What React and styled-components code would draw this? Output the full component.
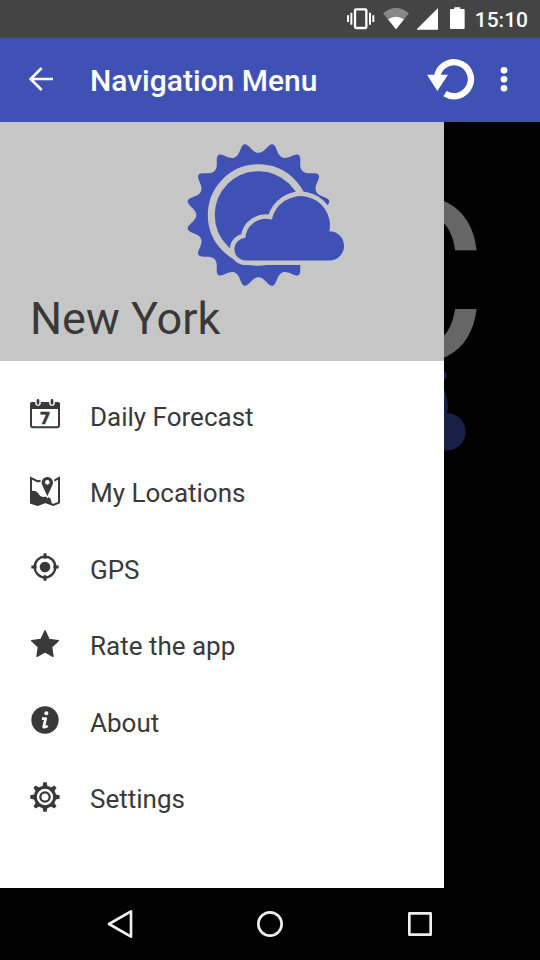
import React from "react";
import styled, { createGlobalStyle } from "styled-components";

const indigo = "#3f51b5";
const ink = "#393939";
const headerGrey = "#c6c6c6";

const GlobalStyle = createGlobalStyle`
  * { box-sizing: border-box; }
  body {
    margin: 0;
    background: #000;
    font-family: Roboto, "Noto Sans", sans-serif;
  }
`;

const Screen = styled.div`
  min-height: 100vh;
  display: flex;
  flex-direction: column;
  background: #000;
`;

const StatusBar = styled.div`
  height: 38px;
  padding-right: 12px;
  display: flex;
  align-items: center;
  justify-content: flex-end;
  gap: 8px;
  background: #444;
  color: #fff;
`;

const Clock = styled.time`
  font-size: 21px;
  font-weight: 500;
  line-height: 24px;
  padding-top: 2px;
`;

const AppBar = styled.header`
  height: 84px;
  padding: 0 32px 0 29px;
  display: flex;
  align-items: center;
  background: ${indigo};
  color: #fff;
`;

const Title = styled.h1`
  margin: 0;
  padding: 2px 0 0 37px;
  flex: 1;
  font-size: 30px;
  font-weight: 500;
  line-height: 36px;
`;

const Actions = styled.div`
  display: flex;
  align-items: center;
  gap: 25px;
`;

const IconButton = styled.button`
  padding: 0;
  border: 0;
  background: none;
  color: inherit;
  display: flex;
  align-items: center;
  justify-content: center;
  cursor: pointer;
`;

const Body = styled.main`
  flex: 1;
  display: grid;
  grid-template-columns: 1fr;
`;

const Scene = styled.section`
  grid-area: 1 / 1;
  display: grid;
  align-items: start;
  justify-items: end;
  opacity: 0.4;
`;

const Unit = styled.div`
  grid-area: 1 / 1;
  padding: 47px 53px 0 0;
  color: #fff;
  font-size: 228px;
  line-height: 228px;
`;

const SceneIcon = styled.div`
  grid-area: 1 / 1;
  padding: 179px 73px 0 0;
`;

const Drawer = styled.aside`
  grid-area: 1 / 1;
  z-index: 1;
  margin-right: 96px;
  display: flex;
  flex-direction: column;
  background: #fff;
`;

const DrawerHeader = styled.div`
  padding: 21px 30px 10px;
  display: flex;
  flex-direction: column;
  background: ${headerGrey};
  color: ${ink};
`;

const HeaderIcon = styled.div`
  display: flex;
  justify-content: flex-end;
  padding-right: 69px;
`;

const Place = styled.h2`
  margin: 0;
  font-size: 45px;
  font-weight: 400;
  line-height: 64px;
`;

const Menu = styled.nav`
  flex: 1;
  display: flex;
`;

const MenuList = styled.ul`
  flex: 1;
  margin: 0;
  padding: 15px 0 53px;
  list-style: none;
  display: grid;
  grid-auto-rows: 1fr;
`;

const MenuItem = styled.li`
  display: flex;
`;

const MenuLink = styled.a`
  flex: 1;
  padding: 0 30px;
  display: flex;
  align-items: center;
  gap: 30px;
  color: ${ink};
  text-decoration: none;
`;

const MenuLabel = styled.span`
  padding-top: 5px;
  font-size: 26px;
  line-height: 32px;
`;

const SystemNav = styled.footer`
  height: 72px;
  padding: 0 45px;
  display: grid;
  grid-template-columns: repeat(3, 1fr);
  color: #eee;
`;

const sunPath = (() => {
  const cx = 235;
  const cy = 240;
  const at = (r, deg, t) => {
    const a = (deg * Math.PI) / 180;
    const x = cx + r * Math.cos(a) - t * Math.sin(a);
    const y = cy + r * Math.sin(a) + t * Math.cos(a);
    return `${x.toFixed(1)} ${y.toFixed(1)}`;
  };
  let d = `M${at(187, 0, 0)}`;
  for (let i = 0; i < 16; i += 1) {
    const a = i * 22.5;
    d += `C${at(187, a, 19)} ${at(217, a + 11.25, -13)} ${at(217, a + 11.25, 0)}`;
    d += `C${at(217, a + 11.25, 13)} ${at(187, a + 22.5, -19)} ${at(187, a + 22.5, 0)}`;
  }
  return `${d}Z`;
})();

function WeatherIcon({ width, height, backdrop }) {
  return (
    <svg width={width} height={height} viewBox="20 24 475 432" aria-hidden="true">
      <path d={sunPath} fill={indigo} />
      <circle cx="235" cy="240" r="142" fill="none" stroke={backdrop} strokeWidth="21" />
      <path
        d="M198 377A34 34 0 0 1 195 309A62 62 0 0 1 275 254A88 88 0 0 1 448 289A44 44 0 0 1 448 377Z"
        fill={indigo}
        stroke={backdrop}
        strokeWidth="27"
        paintOrder="stroke"
      />
    </svg>
  );
}

function MenuIcon({ children }) {
  return (
    <svg width="30" height="30" viewBox="0 0 90 90" fill="none" stroke="none" aria-hidden="true">
      {children}
    </svg>
  );
}

const CalendarIcon = () => (
  <MenuIcon>
    <rect x="3" y="12" width="84" height="73" rx="6" stroke={ink} strokeWidth="6" />
    <path d="M0 30V16Q0 9 7 9H83Q90 9 90 16V30Z" fill={ink} />
    <path d="M24 0V12M66 0V12" stroke="#fff" strokeWidth="17" strokeLinecap="round" />
    <path d="M24 4V13M66 4V13" stroke={ink} strokeWidth="8" strokeLinecap="round" />
    <text
      x="45"
      y="75"
      textAnchor="middle"
      fontFamily="DejaVu Sans"
      fontWeight="700"
      fontSize="48"
      fill={ink}
      stroke={ink}
      strokeWidth="1"
    >
      7
    </text>
  </MenuIcon>
);

const MapIcon = () => (
  <MenuIcon>
    <path d="M32 14L24 16L3 6V80L23 87L46 78L70 87L87 80V6L73 14" stroke={ink} strokeWidth="6" />
    <path d="M2 45Q18 41 26 54Q31 65 44 62Q62 61 63 73L66 85L46 78L23 87L2 80Z" fill={ink} />
    <path d="M52 61Q42 39 37 28A17 17 0 1 1 67 28Q62 39 52 61Z" fill={ink} stroke="#fff" strokeWidth="6" paintOrder="stroke" />
    <circle cx="52" cy="19" r="7" fill="#fff" />
  </MenuIcon>
);

const GpsIcon = () => (
  <MenuIcon>
    <circle cx="45" cy="45" r="31" stroke={ink} strokeWidth="7" />
    <circle cx="45" cy="45" r="16" fill={ink} />
    <path d="M45 4V20M45 70V86M4 45H20M70 45H86" stroke={ink} strokeWidth="9" />
  </MenuIcon>
);

const StarIcon = () => (
  <MenuIcon>
    <path
      d="M45 5L57 31L85 35L65 54L69 82L45 69L21 82L25 54L5 35L33 31Z"
      fill={ink}
      stroke={ink}
      strokeWidth="4"
      strokeLinejoin="round"
    />
  </MenuIcon>
);

const InfoIcon = () => (
  <MenuIcon>
    <circle cx="45" cy="45" r="41" fill={ink} />
    <circle cx="49" cy="25" r="6" fill="#fff" />
    <path d="M36 41H47L41 66Q46 68 53 62" stroke="#fff" strokeWidth="8" strokeLinejoin="round" />
  </MenuIcon>
);

const GearIcon = () => (
  <MenuIcon>
    <circle cx="45" cy="45" r="29" stroke={ink} strokeWidth="9" />
    <circle cx="45" cy="45" r="14" stroke={ink} strokeWidth="7" />
    {[0, 45, 90, 135, 180, 225, 270, 315].map((angle) => (
      <path key={angle} d="M37 16L40 1H50L53 16Z" fill={ink} transform={`rotate(${angle} 45 45)`} />
    ))}
  </MenuIcon>
);

const menuItems = [
  { label: "Daily Forecast", href: "#daily", Icon: CalendarIcon },
  { label: "My Locations", href: "#locations", Icon: MapIcon },
  { label: "GPS", href: "#gps", Icon: GpsIcon },
  { label: "Rate the app", href: "#rate", Icon: StarIcon },
  { label: "About", href: "#about", Icon: InfoIcon },
  { label: "Settings", href: "#settings", Icon: GearIcon },
];

function StatusIcons() {
  return (
    <>
      <svg width="28" height="24" viewBox="21 21 84 72" fill="none" stroke="#fff" aria-label="Vibrate">
        <rect x="45" y="28" width="34" height="56" rx="3" strokeWidth="7" />
        <path d="M24 46V66M34 38V74M90 38V74M100 46V66" strokeWidth="6" />
      </svg>
      <svg width="26" height="24" viewBox="129 21 78 72" aria-label="Wi-Fi">
        <path d="M168 88L129 40Q168 8 207 40Z" fill="#878787" />
        <path d="M168 88L144 58Q168 42 192 58Z" fill="#fff" />
      </svg>
      <svg width="22" height="24" viewBox="231 21 66 72" aria-label="Signal">
        <path d="M229 89H294V24Z" fill="#fff" />
      </svg>
      <svg width="20" height="24" viewBox="321 21 60 72" aria-label="Battery">
        <path d="M343 22H361V27H371Q374 27 374 30V84Q374 87 371 87H333Q330 87 330 84V30Q330 27 333 27H343Z" fill="#fff" />
      </svg>
    </>
  );
}

export default function App() {
  return (
    <Screen>
      <GlobalStyle />
      <StatusBar>
        <StatusIcons />
        <Clock>15:10</Clock>
      </StatusBar>

      <AppBar>
        <IconButton aria-label="Back">
          <svg width="24" height="26" viewBox="0 0 72 78" fill="none" stroke="currentColor" strokeWidth="8">
            <path d="M72 36H6M38 3L5 36L38 69" />
          </svg>
        </IconButton>
        <Title>Navigation Menu</Title>
        <Actions>
          <IconButton aria-label="Refresh">
            <svg width="48" height="44" viewBox="49 61 144 132">
              <path d="M79 120A51 51 0 1 1 103 168" fill="none" stroke="currentColor" strokeWidth="19" />
              <path d="M49 111H112L80 160Z" fill="currentColor" />
            </svg>
          </IconButton>
          <IconButton aria-label="More options">
            <svg width="8" height="26" viewBox="0 0 24 78" fill="currentColor">
              <circle cx="12" cy="10" r="10" />
              <circle cx="12" cy="37" r="10" />
              <circle cx="12" cy="64" r="10" />
            </svg>
          </IconButton>
        </Actions>
      </AppBar>

      <Body>
        <Scene>
          <Unit>C</Unit>
          <SceneIcon>
            <WeatherIcon width={201} height={183} backdrop="#000" />
          </SceneIcon>
        </Scene>
        <Drawer>
          <DrawerHeader>
            <HeaderIcon>
              <WeatherIcon width={158} height={144} backdrop={headerGrey} />
            </HeaderIcon>
            <Place>New York</Place>
          </DrawerHeader>
          <Menu aria-label="Main">
            <MenuList>
              {menuItems.map(({ label, href, Icon }) => (
                <MenuItem key={label}>
                  <MenuLink href={href}>
                    <Icon />
                    <MenuLabel>{label}</MenuLabel>
                  </MenuLink>
                </MenuItem>
              ))}
            </MenuList>
          </Menu>
        </Drawer>
      </Body>

      <SystemNav>
        <IconButton aria-label="System back">
          <svg width="26" height="30" viewBox="0 0 78 90" fill="none" stroke="currentColor" strokeWidth="8" strokeLinejoin="round">
            <path d="M6 45L72 7V83Z" />
          </svg>
        </IconButton>
        <IconButton aria-label="Home">
          <svg width="30" height="30" viewBox="0 0 90 90" fill="none" stroke="currentColor" strokeWidth="8">
            <circle cx="45" cy="45" r="35" />
          </svg>
        </IconButton>
        <IconButton aria-label="Recent apps">
          <svg width="30" height="30" viewBox="0 0 90 90" fill="none" stroke="currentColor" strokeWidth="8" strokeLinejoin="round">
            <rect x="13" y="13" width="64" height="64" />
          </svg>
        </IconButton>
      </SystemNav>
    </Screen>
  );
}
